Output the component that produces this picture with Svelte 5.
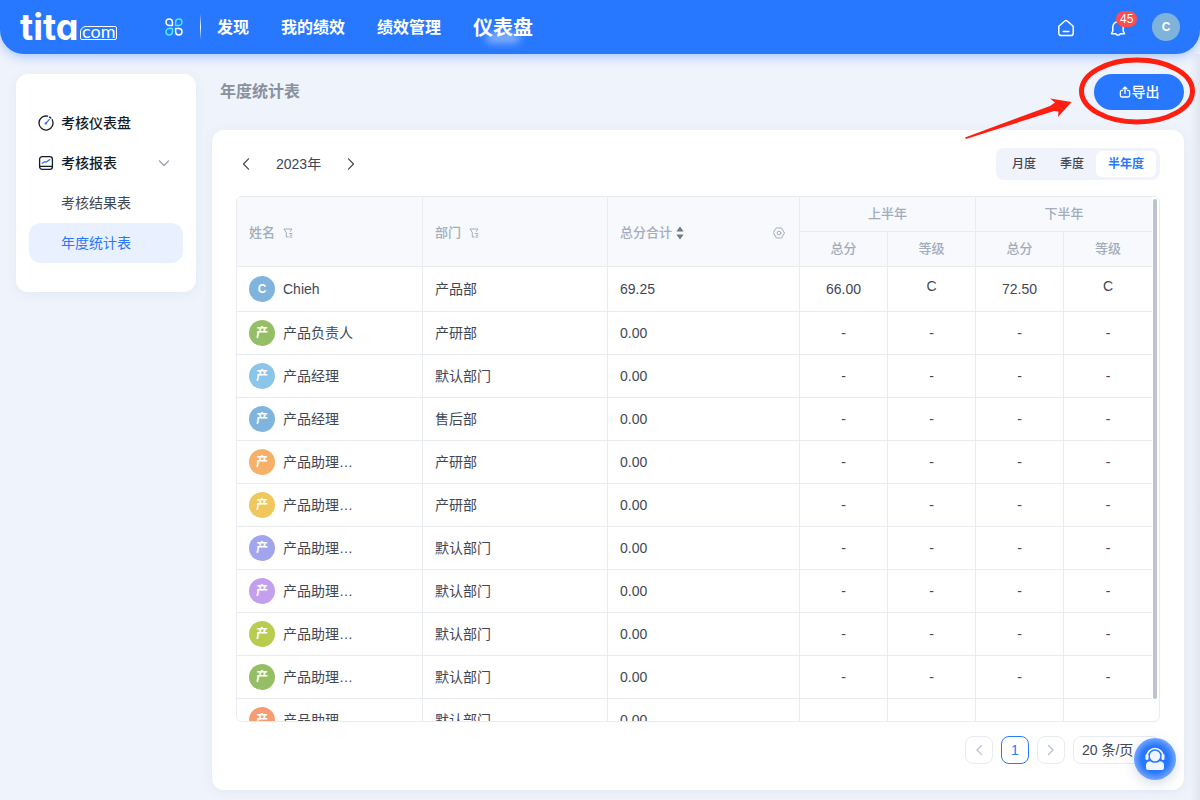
<script lang="ts">
  const nav = ["发现", "我的绩效", "绩效管理", "仪表盘"];
  const periods = ["月度", "季度", "半年度"];
  const halves = ["上半年", "下半年"];

  let active_nav = "仪表盘";
  let period = "半年度";
  let year = 2023;
  let page_size = "20";

  const rows = [
    { name: "Chieh", dept: "产品部", total: "69.25", color: "#7eb4de", cells: ["66.00", "C", "72.50", "C"] },
    { name: "产品负责人", dept: "产研部", total: "0.00", color: "#95bf66" },
    { name: "产品经理", dept: "默认部门", total: "0.00", color: "#8bc6ea" },
    { name: "产品经理", dept: "售后部", total: "0.00", color: "#7eb4de" },
    { name: "产品助理…", dept: "产研部", total: "0.00", color: "#f6b068" },
    { name: "产品助理…", dept: "产研部", total: "0.00", color: "#f0c75c" },
    { name: "产品助理…", dept: "默认部门", total: "0.00", color: "#a1a5ee" },
    { name: "产品助理…", dept: "默认部门", total: "0.00", color: "#c3a0ee" },
    { name: "产品助理…", dept: "默认部门", total: "0.00", color: "#b9cc50" },
    { name: "产品助理…", dept: "默认部门", total: "0.00", color: "#95bf66" },
    { name: "产品助理…", dept: "默认部门", total: "0.00", color: "#f79b72", cells: ["", "", "", ""] },
  ];
</script>

{#snippet filter_icon()}
  <svg class="filter" width="10" height="10" viewBox="0 0 10 10">
    <path d="M7.4 3.4 9 1H1l2.3 3.6V9h1.8M6.6 5.5h2.2M6.6 9h2.2M7.4 7.2h1.4" />
  </svg>
{/snippet}

<div class="page" lang="zh-CN">
  <header class="topbar">
    <a class="logo" href="#home" aria-label="tita.com">
      <span class="logo-word">tita</span><span class="logo-com">com</span>
    </a>
    <button class="icon-btn apps" aria-label="应用">
      <svg width="18" height="18" viewBox="0 0 18 18">
        <path d="M1 4.2a3.2 3.2 0 1 1 6.4 0v3.2H4.2A3.2 3.2 0 0 1 1 4.2Z" />
        <path class="cyan" d="M17 4.2a3.2 3.2 0 1 0-6.4 0v3.2h3.2A3.2 3.2 0 0 0 17 4.2Z" />
        <path class="cyan" d="M1 13.8a3.2 3.2 0 1 0 6.4 0v-3.2H4.2A3.2 3.2 0 0 0 1 13.8Z" />
        <path d="M17 13.8a3.2 3.2 0 1 1-6.4 0v-3.2h3.2a3.2 3.2 0 0 1 3.2 3.2Z" />
      </svg>
    </button>
    <span class="divider"></span>
    <nav class="nav">
      {#each nav as item}
        <a href="#{item}" class:active={item === active_nav} on:click={() => (active_nav = item)}>{item}</a>
      {/each}
    </nav>
    <div class="tools">
      <button class="icon-btn" aria-label="首页">
        <svg width="18" height="18" viewBox="0 0 18 18">
          <path d="M1.8 7.2 7.8 2a1.9 1.9 0 0 1 2.4 0l6 5.2v7a2.4 2.4 0 0 1-2.4 2.4H4.2a2.4 2.4 0 0 1-2.4-2.4Z" />
          <path d="M6.2 12.4h5.6" />
        </svg>
      </button>
      <button class="icon-btn" aria-label="通知">
        <svg width="18" height="18" viewBox="0 0 18 18">
          <path d="M9 1.6v1M3.8 8a5.2 5.2 0 0 1 10.4 0v4l1.4 2.8h-4.4a2.5 2.5 0 0 1-4.4 0H2.4L3.8 12Z" />
        </svg>
        <span class="badge">45</span>
      </button>
      <button class="avatar user">C</button>
    </div>
  </header>

  <div class="body">
    <aside class="sidebar">
      <a class="side-item" href="#dashboard">
        <svg width="16" height="16" viewBox="0 0 16 16">
          <path d="M14.2 4.8A7 7 0 1 1 9.6 1.2M11.6 2.1a7 7 0 0 1 1.3 1" />
          <circle class="dot" cx="7.8" cy="8.4" r="1.2" />
          <path class="blue" d="m8 8.2 3.2-3.6" />
        </svg>
        考核仪表盘
      </a>
      <a class="side-item" href="#reports">
        <svg width="16" height="16" viewBox="0 0 16 16">
          <rect x="1.6" y="1.6" width="12.8" height="12.8" rx="2.6" />
          <path d="M1.6 11.4h12.8" />
          <path class="blue" d="m4.2 8.2 2.4-1.4 1.6.2 3.6-2.4" />
        </svg>
        考核报表
        <svg class="caret" width="12" height="12" viewBox="0 0 12 12"><path d="m1.5 4 4.5 4.5L10.5 4" /></svg>
      </a>
      <a class="side-item sub" href="#results">考核结果表</a>
      <a class="side-item sub active" href="#annual">年度统计表</a>
    </aside>

    <main class="main">
      <div class="title-row">
        <h1>年度统计表</h1>
        <button class="export">
          <svg width="12" height="12" viewBox="0 0 12 12">
            <path d="M3.6 4.4H2.8A1.4 1.4 0 0 0 1.4 5.800v3.8A1.4 1.4 0 0 0 2.8 11h6.4a1.4 1.4 0 0 0 1.4-1.4V5.8a1.4 1.4 0 0 0-1.4-1.4h-.8M6 7.4V1.2M4.2 2.8 6 1l1.8 1.8" />
          </svg>导出
        </button>
        <svg class="callout" width="236" height="90" viewBox="0 0 236 90" aria-hidden="true">
          <ellipse cx="173" cy="37" rx="55.5" ry="31" />
          <path d="M1 83.5 86 52 91 48.5 86 44.500 107.500 48 94 63 94.500 57.500 90 57 2 85Z" />
        </svg>
      </div>

      <section class="card">
        <div class="toolbar">
          <div class="year">
            <button aria-label="上一年" on:click={() => (year -= 1)}>
              <svg width="12" height="12" viewBox="0 0 12 12"><path d="M8.5 .8 3.5 6l5 5.2" /></svg>
            </button>
            <span>{year}年</span>
            <button aria-label="下一年" on:click={() => (year += 1)}>
              <svg width="12" height="12" viewBox="0 0 12 12"><path d="m3.5 .8 5 5.2-5 5.2" /></svg>
            </button>
          </div>
          <div class="segments">
            {#each periods as p}
              <button class:active={p === period} on:click={() => (period = p)}>{p}</button>
            {/each}
          </div>
        </div>

        <div class="table-wrap">
          <table>
            <colgroup>
              <col class="c-name" />
              <col class="c-dept" />
              <col class="c-total" />
              <col class="c-half" span="4" />
            </colgroup>
            <thead>
              <tr>
                <th rowspan="2"><div class="head">姓名 {@render filter_icon()}</div></th>
                <th rowspan="2"><div class="head">部门 {@render filter_icon()}</div></th>
                <th rowspan="2">
                  <div class="head sortable">
                    总分合计
                    <svg class="sort" width="8" height="14" viewBox="0 0 8 14">
                      <path d="M4 .5 7.6 5.6H.4ZM4 13.5 .4 8.4h7.2Z" />
                    </svg>
                    <svg class="gear" width="12" height="12" viewBox="0 0 12 12">
                      <path d="M3.5 1h5L11.5 6l-3 5h-5L.5 6Z" />
                      <circle cx="6" cy="6" r="1.8" />
                    </svg>
                  </div>
                </th>
                {#each halves as half}
                  <th colspan="2" class="mid">{half}</th>
                {/each}
              </tr>
              <tr>
                {#each halves as _}
                  <th class="mid">总分</th>
                  <th class="mid">等级</th>
                {/each}
              </tr>
            </thead>
            <tbody>
              {#each rows as row}
                <tr>
                  <td>
                    <div class="person">
                      <span class="avatar" style="background: {row.color}">{row.name[0]}</span>
                      {row.name}
                    </div>
                  </td>
                  <td>{row.dept}</td>
                  <td>{row.total}</td>
                  {#each row.cells ?? ["-", "-", "-", "-"] as cell}
                    <td class="mid" class:grade={cell === "C"}>{cell}</td>
                  {/each}
                </tr>
              {/each}
            </tbody>
          </table>
          <div class="thumb"></div>
        </div>

        <div class="pager">
          <button disabled aria-label="上一页">
            <svg width="12" height="12" viewBox="0 0 12 12"><path d="M8.5 1.5 4 6l4.5 4.5" /></svg>
          </button>
          <button class="current">1</button>
          <button disabled aria-label="下一页">
            <svg width="12" height="12" viewBox="0 0 12 12"><path d="M3.5 1.5 8 6l-4.5 4.5" /></svg>
          </button>
          <select aria-label="每页条数" bind:value={page_size}>
            <option value="20">20 条/页</option>
            <option value="50">50 条/页</option>
          </select>
        </div>
      </section>
    </main>
  </div>

  <button class="support" aria-label="客服">
    <svg width="22" height="24" viewBox="0 0 22 24">
      <path class="band" d="M3 9.5a8 8 0 0 1 16 0" />
      <rect x="1.5" y="7" width="3" height="6" rx="1.5" />
      <rect x="17.5" y="7" width="3" height="6" rx="1.5" />
      <circle cx="11" cy="9" r="5.2" />
      <path d="M2 18.5c0-2.800 1.6-4.300 4.3-4.300 1.3 1 2.9 1.5 4.7 1.5s3.4-.5 4.7-1.5c2.7 0 4.3 1.5 4.3 4.3V21a2 2 0 0 1-2 2H4a2 2 0 0 1-2-2Z" />
    </svg>
  </button>
</div>

<style>
  :global(body) {
    background: #eff3fb;
  }

  .page {
    --blue: #2878ff;
    --text: #3f4755;
    --muted: #a3acbb;
    --line: #e8ebf0;
    position: relative;
    display: flex;
    flex-direction: column;
    height: 100vh;
    min-height: 480px;
    font: 14px/20px "Liberation Sans", "Noto Sans CJK SC", sans-serif;
    color: var(--text);
    overflow: hidden;
  }
  /* edge of the collapsed drawer */
  .page::after {
    content: "";
    position: absolute;
    top: 54px;
    right: 0;
    bottom: 0;
    width: 10px;
    background: linear-gradient(to right, transparent, rgba(60, 70, 100, 0.08));
    pointer-events: none;
  }

  button {
    font: inherit;
    color: inherit;
    border: 0;
    padding: 0;
    background: none;
    cursor: pointer;
  }
  a {
    color: inherit;
    text-decoration: none;
  }
  svg {
    flex: none;
    fill: none;
    stroke: currentColor;
    stroke-linecap: round;
    stroke-linejoin: round;
  }

  /* ── Top bar ── */
  .topbar {
    display: flex;
    align-items: center;
    flex: none;
    height: 54px;
    padding: 0 20px;
    background: var(--blue);
    color: #fff;
    border-radius: 0 0 24px 24px;
    box-shadow: 0 2px 12px rgba(40, 120, 255, 0.4);
  }
  .logo {
    display: flex;
    align-items: flex-end;
    gap: 2px;
    width: 97px;
    height: 26px;
  }
  .logo-word {
    font: 700 36px/26px Inter, sans-serif;
    font-feature-settings: "cv11";
  }
  .logo-com {
    flex: 1;
    height: 12px;
    border: 1px solid #fff;
    border-radius: 6px 2px 2px 2px;
    font: 18px/8px Lato, sans-serif;
    text-align: center;
  }
  .icon-btn {
    position: relative;
    display: flex;
  }
  .icon-btn svg {
    stroke-width: 1.5;
  }
  .apps {
    margin-left: 48px;
  }
  .apps .cyan {
    stroke: #4ae8ff;
  }
  .divider {
    width: 1px;
    height: 26px;
    margin: 0 16px 0 17px;
    background: linear-gradient(transparent, #fff, transparent);
  }
  .nav {
    display: flex;
    align-items: center;
    gap: 32px;
    padding-top: 2px;
    font-size: 16px;
    font-weight: 700;
    white-space: nowrap;
  }
  .nav .active {
    position: relative;
    font-size: 20px;
  }
  .nav .active::after {
    content: "";
    position: absolute;
    left: 14px;
    right: 14px;
    bottom: -4px;
    height: 8px;
    background: rgba(255, 255, 255, 0.55);
    filter: blur(4px);
  }
  .tools {
    display: flex;
    align-items: center;
    gap: 34px;
    margin-left: auto;
  }
  .tools .icon-btn {
    padding-top: 2px;
  }
  .badge {
    position: absolute;
    top: -6px;
    left: 7px;
    padding: 0 4px;
    border-radius: 8px;
    background: #ff4d4f;
    font-size: 12px;
    line-height: 16px;
  }
  .avatar {
    flex: none;
    width: 26px;
    height: 26px;
    border-radius: 50%;
    color: #fff;
    font-size: 12px;
    font-weight: 700;
    line-height: 26px;
    text-align: center;
  }
  .user {
    width: 28px;
    height: 28px;
    margin-left: -9px;
    background: #7fb3dc;
  }

  /* ── Layout ── */
  .body {
    display: flex;
    flex: 1;
    align-items: flex-start;
    gap: 16px;
    min-height: 0;
    padding: 20px 16px 10px;
  }

  /* ── Sidebar ── */
  .sidebar {
    flex: none;
    box-sizing: border-box;
    width: 180px;
    padding: 29px 13px;
    background: #fff;
    border-radius: 12px;
    box-shadow: 0 2px 12px rgba(80, 110, 170, 0.08);
  }
  .side-item {
    display: flex;
    align-items: center;
    gap: 7px;
    height: 40px;
    padding: 0 13px 0 9px;
    border-radius: 12px;
    color: #141c28;
    font-weight: 500;
  }
  .side-item svg {
    stroke-width: 1.3;
  }
  .side-item .blue {
    stroke: var(--blue);
  }
  .side-item .dot {
    fill: var(--blue);
    stroke: none;
  }
  .side-item .caret {
    margin-left: auto;
    color: #9aa2b0;
  }
  .side-item.sub {
    padding-left: 32px;
    color: var(--text);
    font-weight: 400;
  }
  .side-item.sub.active {
    background: #e9f0ff;
    color: var(--blue);
  }

  /* ── Main ── */
  .main {
    display: flex;
    flex: 1;
    flex-direction: column;
    align-self: stretch;
    gap: 20px;
    min-width: 0;
  }
  .title-row {
    position: relative;
    display: flex;
    align-items: center;
    justify-content: space-between;
    height: 36px;
    padding-left: 8px;
  }
  h1 {
    margin: 0;
    font-size: 16px;
    font-weight: 700;
    color: #89919f;
  }
  .export {
    display: flex;
    align-items: center;
    justify-content: center;
    gap: 1px;
    width: 90px;
    height: 36px;
    border-radius: 18px;
    background: var(--blue);
    color: #fff;
    font-weight: 500;
  }
  .export svg {
    stroke-width: 1.3;
  }
  .callout {
    position: absolute;
    top: -20px;
    right: -16px;
    z-index: 2;
    pointer-events: none;
  }
  .callout ellipse {
    stroke: #ff1e10;
    stroke-width: 5;
  }
  .callout path {
    fill: #ff1e10;
    stroke: none;
  }
  .card {
    display: flex;
    flex: 1;
    flex-direction: column;
    min-height: 0;
    padding: 18px 24px 26px;
    background: #fff;
    border-radius: 12px;
    box-shadow: 0 2px 12px rgba(80, 110, 170, 0.08);
  }
  .toolbar {
    display: flex;
    align-items: center;
    justify-content: space-between;
    margin-bottom: 16px;
  }
  .year {
    display: flex;
    align-items: center;
    gap: 20px;
  }
  .year button {
    display: flex;
    align-items: center;
    justify-content: center;
    width: 20px;
    height: 20px;
  }
  .year svg {
    stroke-width: 1.2;
  }
  .segments {
    display: flex;
    padding: 3px 4px;
    border-radius: 8px;
    background: #f0f3fb;
  }
  .segments button {
    height: 26px;
    padding: 0 12px;
    border-radius: 6px;
    font-size: 12px;
    font-weight: 500;
  }
  .segments .active {
    background: #fff;
    color: var(--blue);
    font-weight: 700;
  }

  /* ── Table ── */
  .table-wrap {
    position: relative;
    flex: 1;
    min-height: 0;
    padding-right: 7px;
    border: 1px solid var(--line);
    border-radius: 6px;
    overflow: hidden;
  }
  table {
    width: 100%;
    table-layout: fixed;
    border-collapse: separate;
    border-spacing: 0;
  }
  .c-name {
    width: 186px;
  }
  .c-dept {
    width: 185px;
  }
  .c-total {
    width: 192px;
  }
  .c-half {
    width: 88px;
  }
  th,
  td {
    box-sizing: border-box;
    height: 43px;
    padding: 0 12px;
    border-right: 1px solid var(--line);
    border-bottom: 1px solid var(--line);
    text-align: left;
  }
  th {
    height: 35px;
    background: #f7f9fd;
    color: var(--muted);
    font-size: 13px;
    font-weight: 500;
  }
  tbody tr:first-child td {
    height: 45px;
  }
  td:last-child,
  thead tr:first-child th:last-child,
  thead tr:last-child th:last-child {
    border-right: 0;
  }
  .mid {
    text-align: center;
  }
  td.grade {
    padding-bottom: 6px;
  }
  .head {
    display: flex;
    align-items: center;
    gap: 8px;
    padding-top: 2px;
  }
  .sortable {
    gap: 4px;
  }
  .sort {
    fill: #6f7888;
    stroke: none;
  }
  .gear {
    margin-left: auto;
    margin-right: 2px;
  }
  .person {
    display: flex;
    align-items: center;
    gap: 8px;
  }
  .thumb {
    position: absolute;
    top: 2px;
    bottom: 22px;
    right: 2px;
    width: 4px;
    border-radius: 2px;
    background: #bcc4d3;
  }

  /* ── Pager ── */
  .pager {
    display: flex;
    justify-content: flex-end;
    gap: 8px;
    margin-top: 14px;
  }
  .pager button,
  .pager select {
    box-sizing: border-box;
    height: 28px;
    border: 1px solid var(--line);
    border-radius: 8px;
    background: #fff;
  }
  .pager button {
    display: flex;
    align-items: center;
    justify-content: center;
    width: 28px;
    color: #bcc4d3;
  }
  .pager svg {
    stroke-width: 1.4;
  }
  .pager .current {
    border-color: var(--blue);
    color: var(--blue);
  }
  .pager select {
    width: 87px;
    padding: 0 8px;
    appearance: none;
    font: inherit;
    color: inherit;
  }

  .support {
    position: absolute;
    right: 24px;
    bottom: 20px;
    display: flex;
    align-items: center;
    justify-content: center;
    width: 42px;
    height: 42px;
    border-radius: 50%;
    background: radial-gradient(circle, #2878ff 45%, #78a8ff 72%);
    box-shadow: 0 4px 12px rgba(60, 90, 150, 0.2);
    color: #fff;
  }
  .support svg {
    fill: #f0f6ff;
    stroke: none;
  }
  .support .band {
    fill: none;
    stroke: #fff;
    stroke-width: 1.6;
  }
</style>
